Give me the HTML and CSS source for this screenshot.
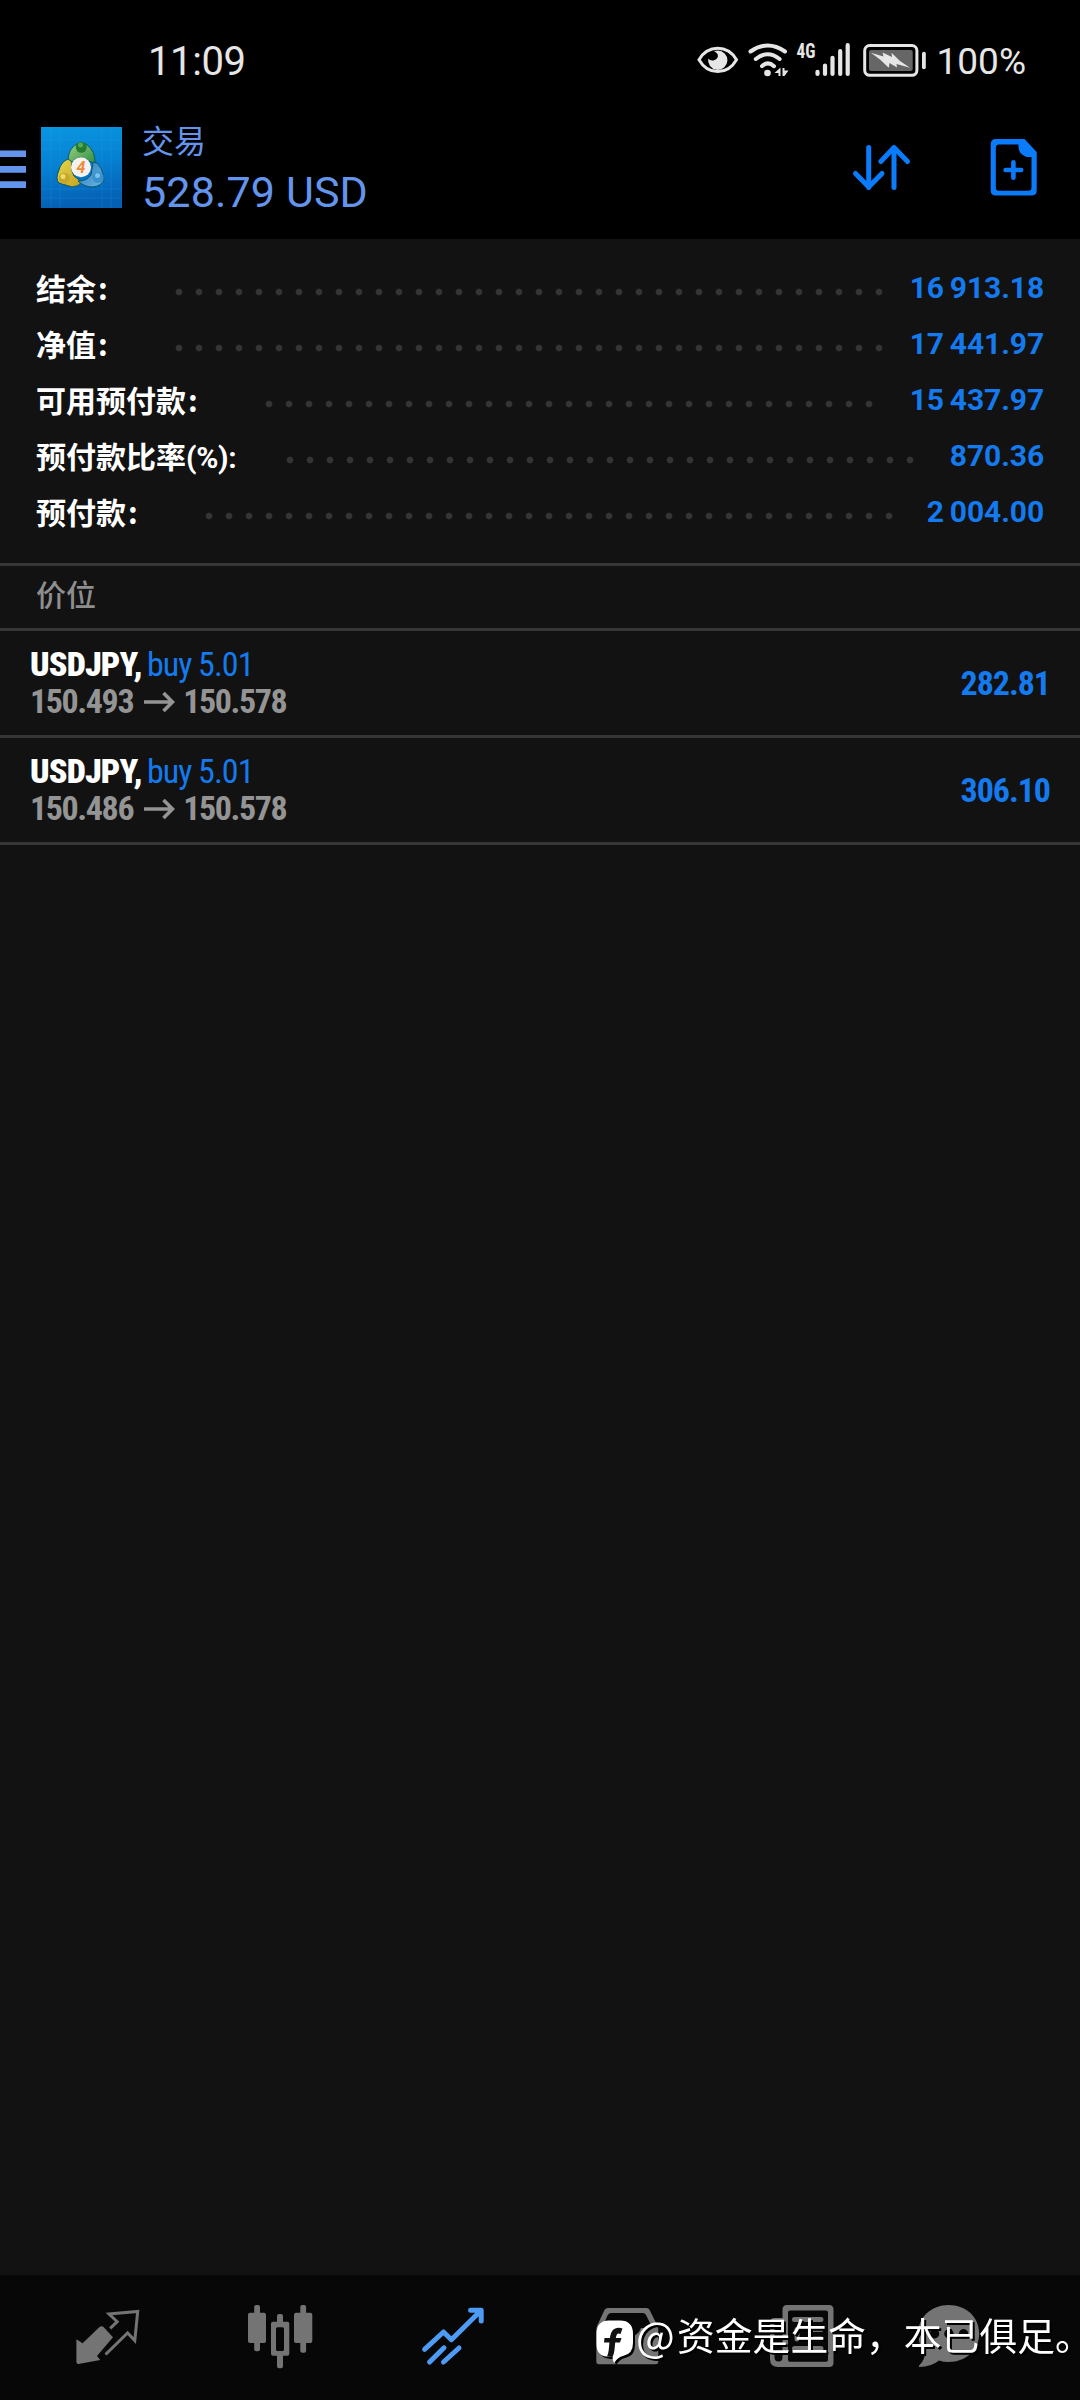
FILE: index.html
```
<!DOCTYPE html>
<html lang="zh-CN">
<head>
<meta charset="utf-8">
<title>交易</title>
<link rel="stylesheet" href="styles.css">
</head>
<body>
<div class="screen">
  <div class="status">
    <span class="clock">11:09</span>
    <div class="indicators">
      <svg class="eye" viewBox="698 40 42 40"><path d="M700 58.7C709 43.500 728.500 43.500 737.500 58.700C728.500 74.500 709 74.500 700 58.700Z" fill="none" stroke="#e6e6e6" stroke-width="3"/><path d="M718.500 49.500A9.700 9.700 0 1 1 709.200 57.500Q711 60 714.500 59.500Q719.500 58 718.800 53.500Q717.500 51 715 50.300Z" fill="#e6e6e6"/></svg>
      <svg class="wifi" viewBox="748 40 44 40"><g fill="none" stroke="#e6e6e6" stroke-width="4" stroke-linecap="round"><path d="M751.500 50.500Q768.700 38.500 786 50.500"/><path d="M756.800 58Q768.700 48.500 780.600 58"/><path d="M763 65.200Q768.700 59.500 775 65.200"/></g><circle cx="768.500" cy="72" r="3.300" fill="#e6e6e6"/><path d="M775.500 72L781.500 66.500V75H779.500V72ZM783.500 67H785.500V69.500H789.500L785.500 75H783.500Z" fill="#e6e6e6"/></svg>
      <svg class="signal" viewBox="797 30 56 60"><text class="net" x="797.500" y="57.300" textLength="19" lengthAdjust="spacingAndGlyphs">4G</text><g stroke="#e6e6e6" stroke-width="4.200" stroke-linecap="round"><path d="M818.500 70.800V72.900M826 64.500V72.900M833.500 56.800V72.900M841.200 50.200V72.900M848.700 44.200V72.900"/></g></svg>
      <svg class="battery" viewBox="863 40 66 40"><rect x="865.700" y="44.500" width="52.200" height="29.800" rx="5" fill="none" stroke="#e6e6e6" stroke-width="3"/><rect x="870" y="49" width="43.700" height="21" rx="2" fill="#666"/><path d="M872 51.800L884.500 55.500L883.500 51.500L893 56L892.500 51.800L901 60L911 66.800L897.500 63L898 66.500L890.500 62L889.800 66.700L881 58.500Z" fill="#e6e6e6"/><rect x="923" y="50.700" width="3.800" height="17.500" rx="1.900" fill="#e6e6e6"/></svg>
      <span class="level">100%</span>
    </div>
  </div>

  <header class="bar">
    <svg class="menu" viewBox="0 150 26 38"><path d="M0 153.700H26M0 169.400H26M0 184.600H26" stroke="#6495ed" stroke-width="6.600"/></svg>
    <svg class="logo" viewBox="0 0 81 81">
      <defs>
        <linearGradient id="sky" x1="0" y1="0" x2=".15" y2="1"><stop offset="0" stop-color="#0a96e0"/><stop offset=".5" stop-color="#0681d2"/><stop offset="1" stop-color="#0560b4"/></linearGradient>
        <linearGradient id="green" x1="0" y1="0" x2="1" y2="1"><stop offset="0" stop-color="#9ccf86"/><stop offset="1" stop-color="#24883a"/></linearGradient>
        <linearGradient id="gold" x1="0" y1="0" x2="1" y2="1"><stop offset="0" stop-color="#e3d94c"/><stop offset="1" stop-color="#c5a01d"/></linearGradient>
        <linearGradient id="blue" x1="0" y1="0" x2="1" y2="1"><stop offset="0" stop-color="#2276b6"/><stop offset="1" stop-color="#6db8e8"/></linearGradient>
      </defs>
      <rect width="81" height="81" fill="url(#sky)"/>
      <path d="M10 0V81M19 0V81M61 0V81M70 0V81M0 13H81M0 22H81M0 62H81M0 71H81" stroke="#2aa4ec" stroke-width=".6" opacity=".35"/>
      <g stroke="#0a5866" stroke-width="1">
        <path d="M27 32Q28 21 36 17L45 17Q55 24 54 37L46 33Q40 29 35 32Q29 36 27 40Z" fill="url(#green)"/>
        <path d="M27 32L31 35Q29 43 33 49L41 55Q37 60 31 60L18 56Q14 52 18 43Q20 35 27 32Z" fill="url(#gold)"/>
        <path d="M52 35L56 36Q61 41 62 47L63 53Q60 59 52 60Q43 60 37 54Q46 54 50 48Z" fill="url(#blue)"/>
      </g>
      <circle cx="40.300" cy="20.300" r="5.500" fill="#237d30"/><circle cx="39.500" cy="18" r="2.500" fill="#57a757"/>
      <circle cx="23.300" cy="51.300" r="5.600" fill="#c7a62a"/><circle cx="22" cy="49.500" r="2.500" fill="#ecdc68"/>
      <circle cx="57" cy="50.300" r="5.600" fill="#3b91cb"/><circle cx="56.500" cy="48.500" r="2.500" fill="#79c2ec"/>
      <circle cx="40" cy="40.300" r="10" fill="#f4f2ee"/>
      <text class="four" x="40" y="46" text-anchor="middle">4</text>
    </svg>
    <div class="title">
      <span class="name">交易</span>
      <span class="profit">528.79 USD</span>
    </div>
    <svg class="sort" viewBox="850 140 62 56"><path d="M868.700 147.500V187.500M855.500 173.500L868.700 187L882 173.500M894 187.500V148M880.800 161.500L894 147.500L907.500 161.500" fill="none" stroke="#0a7cfb" stroke-width="5" stroke-linecap="round" stroke-linejoin="round"/></svg>
    <svg class="order" viewBox="988 136 52 62"><path d="M996 139H1024.500L1036.700 152V190.500Q1036.700 195.600 1031.500 195.600H996Q990.700 195.600 990.700 190.500V144.500Q990.700 139 996 139ZM1018.500 144.500H999Q995.800 144.500 995.800 148V187.500Q995.800 190.800 999 190.800H1028.500Q1031.500 190.800 1031.500 187.500V157H1026.500Q1018.500 154 1018.500 147Z" fill="#0a7cfb" fill-rule="evenodd"/><path d="M1013.400 162.200V177.800M1005.600 170H1021.200" stroke="#0a7cfb" stroke-width="4.600" stroke-linecap="round"/></svg>
  </header>

  <main>
    <section class="summary">
      <div class="row balance"><span>结余<u>:</u></span><i class="dots"></i><b>16 913.18</b></div>
      <div class="row equity"><span>净值<u>:</u></span><i class="dots"></i><b>17 441.97</b></div>
      <div class="row free"><span>可用预付款<u>:</u></span><i class="dots"></i><b>15 437.97</b></div>
      <div class="row ratio"><span>预付款比率<em>(%):</em></span><i class="dots"></i><b>870.36</b></div>
      <div class="row margin"><span>预付款<u>:</u></span><i class="dots"></i><b>2 004.00</b></div>
    </section>
    <h2 class="group">价位</h2>
    <div class="deal">
      <div>
        <div class="line"><strong>USDJPY,</strong><span class="side">buy 5.01</span></div>
        <div class="line price"><span>150.493</span><svg class="to" viewBox="0 0 31 22"><path d="M0 11H28M19.500 2L28.500 11L19.500 20" fill="none" stroke="#949494" stroke-width="3.600"/></svg><span>150.578</span></div>
      </div>
      <span class="gain">282.81</span>
    </div>
    <div class="deal">
      <div>
        <div class="line"><strong>USDJPY,</strong><span class="side">buy 5.01</span></div>
        <div class="line price"><span>150.486</span><svg class="to" viewBox="0 0 31 22"><path d="M0 11H28M19.500 2L28.500 11L19.500 20" fill="none" stroke="#949494" stroke-width="3.600"/></svg><span>150.578</span></div>
      </div>
      <span class="gain">306.10</span>
    </div>
  </main>

  <nav class="tabs">
    <svg class="quotes" viewBox="75 50 66 70"><path d="M110.200 78.300L117.200 71.700L109 64L137.700 61.500L134.800 90.500L127.600 83L105.500 104.500" fill="none" stroke="#747474" stroke-width="3"/><path d="M76.400 89.300L82.600 93.300L99.500 77Q101.600 75.500 103.500 77L113 87.300L97 106L100.200 110L78.500 114Q76.400 114 76.400 112Z" fill="#747474"/></svg>
    <svg class="chart" viewBox="248 50 66 70" fill="#747474"><rect x="248" y="62.700" width="18" height="30.300" rx="2"/><rect x="254.200" y="55" width="5.800" height="46.300" rx="2"/><rect x="294" y="62.700" width="18.300" height="30.300" rx="2"/><rect x="300.300" y="55" width="5.800" height="47.700" rx="2"/><path d="M279 64H281Q283 64 283 66V71.700H287.300Q289.300 71.700 289.300 73.700V103.700Q289.300 105.700 287.300 105.700H283V116.300Q283 118.300 281 118.300H279Q277 118.300 277 116.300V105.700H273Q271 105.700 271 103.700V73.700Q271 71.700 273 71.700H277V66Q277 64 279 64ZM277.500 77.300Q276 77.300 276 79V99.500Q276 101 277.500 101H282.500Q284 101 284 99.500V79Q284 77.300 282.500 77.300Z" fill-rule="evenodd"/></svg>
    <svg class="trade" viewBox="421 50 66 70"><path d="M424.600 99.300L443.500 82L451.400 89.700L480.500 61M470.600 60.200H481.200V71M429.600 112L444 97.800M443.500 112L459 98" fill="none" stroke="#4d9bf5" stroke-width="5" stroke-linecap="round" stroke-linejoin="round"/></svg>
    <svg class="history" viewBox="594 50 66 70"><path d="M608 58H646.500Q648.500 58 649.500 59.800L657.500 76Q658.300 78 658.300 80V111.500Q658.300 114.300 655.500 114.300H599Q596.300 114.300 596.300 111.500V80Q596.300 78 597 76L604.500 60Q605.500 58 608 58ZM611 63Q608.500 63 607.500 65.500L602 78H614Q616 87 627 87Q638 87 641 78H652.500L646 65Q645 63 643 63Z" fill="#747474" fill-rule="evenodd"/></svg>
    <svg class="news" viewBox="767 50 68 70"><path d="M787 55H829Q833.500 55 833.500 59.500V112.500Q833.500 117 829 117H778Q770 117 770 109V72.500Q770 68 774.500 68H782.500V59.500Q782.500 55 787 55ZM790 60.500Q788 60.500 788 62.500V109.700Q788 111.700 790 111.700H826Q828 111.700 828 109.700V62.500Q828 60.500 826 60.500ZM774.500 73V107Q774.500 111.500 778.500 111.500Q782.500 111.500 782.500 107V73Z" fill="#747474" fill-rule="evenodd"/><path d="M794.500 69.500H821M811 79.500H821M811 89H821M794.500 98.500H821M797 79.500V89" stroke="#747474" stroke-width="5" stroke-linecap="round"/></svg>
    <svg class="chat" viewBox="916 50 66 70"><path d="M948.700 55C966 55 979.200 67 979.200 83.500C979.200 100 966 112 948.700 112Q943.500 112 939 110.500Q931 117 919.500 117Q918 116.500 919.500 115Q925.500 109.500 924.500 102Q918.300 95 918.300 83.500C918.300 67 931.500 55 948.700 55ZM934.500 79A4.700 4.700 0 1 0 934.600 79ZM948.900 79A4.700 4.700 0 1 0 949 79ZM963.500 79A4.700 4.700 0 1 0 963.600 79Z" fill="#747474" fill-rule="evenodd"/></svg>
  </nav>

  <div class="mark">
    <svg class="badge" viewBox="595 68 40 48"><path d="M609 70.500H620Q633 70.500 633 84V93Q633 104 623 106Q618 107 614 113Q612.500 110 612.500 106.800H609Q596.500 106.800 596.500 94V84Q596.500 70.500 609 70.500Z" fill="#fff"/><path d="M607 106.500C610.500 100 608 86 612.500 80.500C615 77.300 619.500 77 622.500 78.500L620.500 84C617.500 82.500 616.500 84 615.800 88H621.500L620 92.500H615.200C614.500 98 614.800 103 612.500 107ZM604.500 88H611V92.500H604Z" fill="#111"/></svg>
    <span class="at">@</span><span>资金是生命，本已俱足。</span>
  </div>
</div>
</body>
</html>
```
FILE: styles.css
```
*{box-sizing:border-box}
body{margin:0;background:#121212}
.screen{width:1080px;height:2400px;display:flex;flex-direction:column;background:#121212;font-family:Roboto,"Noto Sans CJK SC",sans-serif;position:relative;overflow:hidden}
svg{display:block;flex:none}

.status{flex:none;height:122px;background:#000;color:#e6e6e6;display:flex;align-items:center;justify-content:space-between;padding:0 54px 0 148px}
.clock{font-size:40px;font-weight:450;letter-spacing:-.4px}
.indicators{display:flex;align-items:center}
.eye{width:42px;height:40px}
.wifi{width:44px;height:40px;margin-left:8px}
.signal{width:56px;height:60px;margin-left:5px}
.battery{width:66px;height:40px;margin-left:10px}
.net{font:700 21px "Roboto Condensed",sans-serif;fill:#e6e6e6}
.level{font-size:37px;font-weight:450;margin-left:9px}

.bar{flex:none;height:117px;background:#000;display:flex;padding-top:5px}
.menu{width:26px;height:38px;margin-top:23px}
.logo{width:81px;height:81px;margin-left:15px}
.four{font:italic 700 16px Roboto,sans-serif;fill:#ee8a3c}
.title{display:flex;flex-direction:column;color:#6495ed;margin-left:20px;width:708px}
.name{font-size:32px;line-height:30px}
.profit{font-size:43px;line-height:50px;letter-spacing:.15px;margin-top:10px}
.sort{width:62px;height:56px;margin-top:13px}
.order{width:52px;height:62px;margin:9px 0 0 76px}

main{flex:1;min-height:0}
.summary{padding:20px 36px;height:324px}
.row{height:56px;display:flex;align-items:center}
.row span{font:700 30px "Noto Sans CJK SC",sans-serif;color:#fff}
.row em{font:700 30px Roboto,sans-serif;letter-spacing:-.3px}
.row u{text-decoration:none;margin-left:2px}
.row b{font:700 30px Roboto,sans-serif;letter-spacing:-.1px;word-spacing:-1.5px;color:#147aee;margin-left:auto}
.dots{height:8px;margin-top:9px;background:radial-gradient(circle at center,#343434 2.8px,transparent 3.8px) 0 0/20px 8px repeat-x}
.balance span,.equity span{width:133px}
.balance .dots,.equity .dots{width:720px}
.free span{width:223px}
.free .dots{width:620px}
.ratio span{width:244px}
.ratio .dots{width:640px}
.margin span{width:163px}
.margin .dots{width:700px}

.group{margin:0;height:68px;border:solid #363636;border-width:3px 0;padding:0 36px 8px;display:flex;align-items:center;font:500 30px "Noto Sans CJK SC",sans-serif;color:#8e8e8e}
.deal{height:107px;border-bottom:3px solid #363636;padding:0 30px;display:flex;align-items:center;justify-content:space-between;font:700 34px "Roboto Condensed",sans-serif}
.line{display:flex;align-items:center;height:37px;line-height:37px;color:#fff}
.line strong{letter-spacing:-.85px}
.side{font-weight:400;color:#147aee;letter-spacing:-1px;margin-left:5px}
.price{color:#949494;letter-spacing:-1.4px}
.to{width:31px;height:22px;margin:0 8px 0 11px}
.gain{color:#147aee;letter-spacing:-1.05px}

.tabs{flex:none;height:125px;background:#070707;display:flex;padding:25px 98px 0 75px;justify-content:space-between}
.tabs svg{width:66px;height:70px}
.tabs .news{width:68px}
.tabs .chat{margin-left:-26px}

.mark{position:absolute;left:595px;top:2318px;display:flex;color:#fff;filter:drop-shadow(2px 2px 0 #000)}
.badge{width:40px;height:48px}
.mark span{font:400 37.8px/48px "Noto Sans CJK SC",sans-serif;white-space:nowrap;margin-top:-8px}
.mark .at{font-size:41px;width:41px;margin-left:1px}
```
